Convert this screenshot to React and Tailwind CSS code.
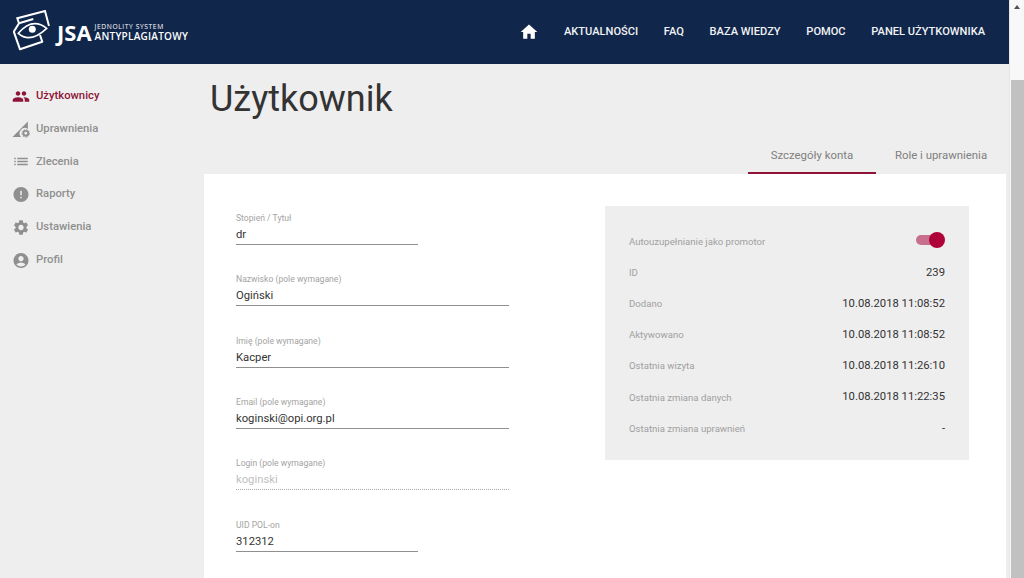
import React from "react";
import { MdPeople, MdHome, MdList, MdError, MdSettings, MdAccountCircle } from "react-icons/md";

function Logo() {
  return (
    <svg width="44" height="44" viewBox="0 0 44 44" className="shrink-0" fill="none">
      <path d="M6 13.3 L4.3 8.3 L32 1 L36 16" stroke="#fff" strokeWidth="2" />
      <path d="M20.3 9 L6 13.3 L0.8 21.7 L7 39.3 L29.3 31.7 L27 25" stroke="#fff" strokeWidth="2" strokeLinejoin="round" />
      <path d="M5.3 23.3 Q19.3 7 33.7 18.3 Q17 34 5.3 23.3 Z" stroke="#fff" strokeWidth="1.6" fill="#10264b" />
      <circle cx="19.3" cy="19.3" r="3.5" fill="#fff" />
    </svg>
  );
}

function PermIcon({ className }) {
  return (
    <svg viewBox="0 0 17 17" width="18" height="18" className={className}>
      <path d="M0.5 16 L15 1.5 V8.4 A5 5 0 0 0 8.6 16 Z" fill="currentColor" />
      <circle cx="13" cy="12.6" r="2.3" fill="none" stroke="currentColor" strokeWidth="1.8" />
      <circle cx="13" cy="12.6" r="3.6" fill="none" stroke="currentColor" strokeWidth="0.9" strokeDasharray="1.2 1.2" />
    </svg>
  );
}

const sidebar = [
  { label: "Użytkownicy", icon: <MdPeople size={19} />, active: true },
  { label: "Uprawnienia", icon: <PermIcon /> },
  { label: "Zlecenia", icon: <MdList size={19} /> },
  { label: "Raporty", icon: <MdError size={19} /> },
  { label: "Ustawienia", icon: <MdSettings size={19} /> },
  { label: "Profil", icon: <MdAccountCircle size={19} /> },
];

const navItems = ["AKTUALNOŚCI", "FAQ", "BAZA WIEDZY", "POMOC", "PANEL UŻYTKOWNIKA"];

const fields = [
  { label: "Stopień / Tytuł", value: "dr", short: true },
  { label: "Nazwisko (pole wymagane)", value: "Ogiński" },
  { label: "Imię (pole wymagane)", value: "Kacper" },
  { label: "Email (pole wymagane)", value: "koginski@opi.org.pl" },
  { label: "Login (pole wymagane)", value: "koginski", disabled: true },
  { label: "UID POL-on", value: "312312", short: true },
];

const details = [
  ["ID", "239"],
  ["Dodano", "10.08.2018 11:08:52"],
  ["Aktywowano", "10.08.2018 11:08:52"],
  ["Ostatnia wizyta", "10.08.2018 11:26:10"],
  ["Ostatnia zmiana danych", "10.08.2018 11:22:35"],
  ["Ostatnia zmiana uprawnień", "-"],
];

export default function App() {
  return (
    <div className="flex h-[578px] w-[1024px] overflow-hidden bg-[#eeeeee] font-['Roboto',sans-serif]">
      <div className="flex w-[1009px] flex-col">
        <header className="flex h-[64px] shrink-0 items-center justify-between bg-[#10264b] pl-[13px] pr-[24px] text-white">
          <div className="flex items-center">
            <Logo />
            <span className="font-['Open_Sans',sans-serif] text-[22px] leading-none font-bold">JSA</span>
            <div className="ml-[3px] flex flex-col font-['Open_Sans',sans-serif]">
              <span className="h-[8px] text-[6.7px] leading-[8px] tracking-[0.6px]">JEDNOLITY SYSTEM</span>
              <span className="h-[10px] text-[10px] leading-[10px] font-semibold tracking-[0.25px]">ANTYPLAGIATOWY</span>
            </div>
          </div>
          <nav className="flex items-center gap-[25.7px] text-[11.1px] font-medium text-[#f2f3f5]">
            <MdHome size={20} className="mr-[-1px] text-white" />
            {navItems.map((n) => (
              <span key={n}>{n}</span>
            ))}
          </nav>
        </header>
        <div className="flex min-h-0 flex-1">
          <aside className="w-[204px] shrink-0 pt-[16px] pl-[12px]">
            {sidebar.map((s) => (
              <div
                key={s.label}
                className={
                  s.active
                    ? "flex h-[32.8px] items-center gap-[6px] text-[11.25px] font-medium text-[#8e1537]"
                    : "flex h-[32.8px] items-center gap-[6px] text-[11.25px] font-medium text-[#8f8f8f]"
                }
              >
                <span className="flex w-[18px] justify-center">{s.icon}</span>
                <span>{s.label}</span>
              </div>
            ))}
          </aside>
          <main className="flex min-w-0 flex-1 flex-col pr-[3px]">
            <h1 className="mt-[15px] ml-[6px] text-[36px] leading-[40px] font-normal text-[#333333]">Użytkownik</h1>
            <div className="mt-[17px] flex h-[38px] shrink-0 justify-end text-[11.4px] text-[#808080]">
              <div className="flex w-[128px] items-center justify-center border-b-2 border-[#8e1537] pt-[3px]">Szczegóły konta</div>
              <div className="flex w-[130px] items-center justify-center pt-[1px]">Role i uprawnienia</div>
            </div>
            <section className="flex flex-1 items-start justify-between bg-white pt-[32px] pr-[37px] pl-[32px]">
              <div className="flex w-[273px] flex-col gap-[28.4px] pt-[5.8px]">
                {fields.map((f) => (
                  <div
                    key={f.label}
                    className={
                      (f.short ? "w-[182px] " : "w-[273px] ") +
                      (f.disabled ? "border-b border-dotted border-[#aaaaaa]" : "border-b border-[#8f8f8f]")
                    }
                  >
                    <div className="h-[12px] text-[8.6px] leading-[12px] text-[#a3a3a3]">{f.label}</div>
                    <div className={f.disabled ? "h-[20px] pt-[1px] text-[11.25px] leading-[20px] text-[#c0c0c0]" : "h-[20px] pt-[1px] text-[11.25px] leading-[20px] text-[#333333]"}>
                      {f.value}
                    </div>
                  </div>
                ))}
              </div>
              <div className="w-[364px] bg-[#eeeeee] px-[24px] pt-[20.3px] pb-[15.5px]">
                <div className="flex h-[31.2px] items-center justify-between">
                  <span className="text-[9.6px] text-[#a0a0a0]">Autouzupełnianie jako promotor</span>
                  <span className="relative top-[-2px] mr-[5px] block h-[10px] w-[24px] rounded-full bg-[#c96f8e]">
                    <span className="absolute top-[-3px] right-[-5px] block h-[16px] w-[16px] rounded-full bg-[#b0003a]"></span>
                  </span>
                </div>
                {details.map(([k, v]) => (
                  <div key={k} className="flex h-[31.2px] items-center justify-between">
                    <span className="text-[9.6px] text-[#a0a0a0]">{k}</span>
                    <span className="text-[11.25px] text-[#333333]">{v}</span>
                  </div>
                ))}
              </div>
            </section>
          </main>
        </div>
      </div>
      <div className="flex w-[15px] flex-col items-center border-l border-[#e6e6e6] bg-[#f8f8f8]">
        <span className="mt-[5px] h-0 w-0 border-x-[3.5px] border-b-[4px] border-x-transparent border-b-[#505050]"></span>
        <span className="mt-[71px] w-[13px] flex-1 bg-[#c1c1c1]"></span>
      </div>
    </div>
  );
}
